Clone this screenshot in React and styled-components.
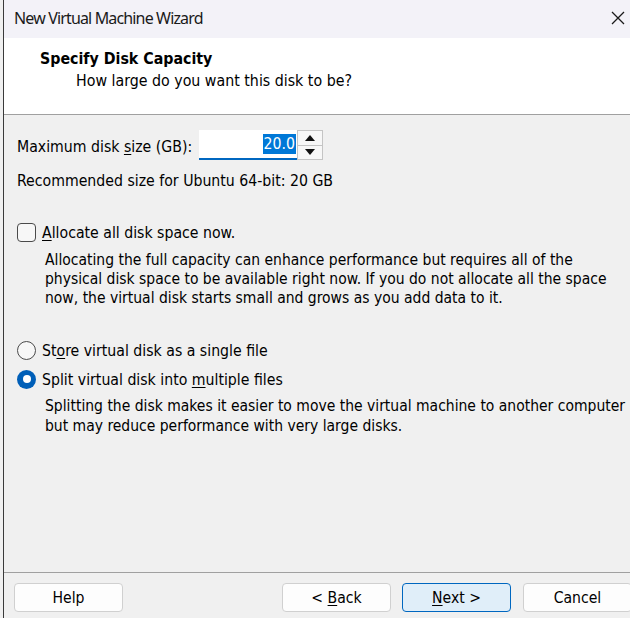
import React from "react";
import styled, { createGlobalStyle } from "styled-components";

const Global = createGlobalStyle`
  html, body { margin: 0; padding: 0; background: #f0f0f0; overflow: hidden; }
  * { box-sizing: border-box; }
`;

const BODY_FONT = `"DejaVu Sans Condensed", "DejaVu Sans", sans-serif`;

const Screen = styled.div`
  width: 630px;
  height: 618px;
  padding-left: 3px;
  overflow: hidden;
  background: #f0f0f0;
  font-family: ${BODY_FONT};
  font-size: 15.7px;
  color: #000;
`;

const Window = styled.div`
  width: 640px;
  height: 618px;
  border-left: 1px solid #3a3a3a;
  display: flex;
  flex-direction: column;
  background: #f0f0f0;
`;

const TitleBar = styled.div`
  height: 38px;
  flex: none;
  background: #f3f2f8;
  display: flex;
  align-items: center;
  justify-content: space-between;
  padding: 0 0 2px 10px;
`;

const TitleText = styled.div`
  font-family: "Noto Sans", sans-serif;
  font-size: 16px;
  letter-spacing: -0.85px;
  color: #1a1a1a;
`;

const CloseBox = styled.div`
  width: 24px;
  margin-right: 13px;
  display: flex;
  justify-content: center;
`;

const Header = styled.div`
  height: 77px;
  flex: none;
  background: #fff;
  border-bottom: 1px solid #a0a0a0;
  padding: 12px 0 0 36px;
`;

const HeaderTitle = styled.div`
  font-weight: bold;
  font-size: 15.8px;
  line-height: 18px;
`;

const HeaderSub = styled.div`
  margin-top: 4px;
  padding-left: 36px;
  font-size: 15.8px;
  line-height: 18px;
`;

const Body = styled.div`
  flex: 1;
  padding: 15px 0 0 13px;
  display: flex;
  flex-direction: column;
`;

const FieldRow = styled.div`
  display: flex;
  align-items: center;
  height: 30px;
`;

const Label = styled.span`
  width: 182px;
  padding-top: 2px;
`;

const Input = styled.div`
  width: 98px;
  height: 30px;
  background: #fff;
  border-bottom: 2px solid #0067c0;
  display: flex;
  align-items: center;
  justify-content: flex-end;
  padding: 0 1px 0 0;
`;

const Selected = styled.span`
  background: #0078d7;
  color: #fff;
  padding: 1px 1px 2px 1px;
  line-height: 17px;
`;

const Spinner = styled.div`
  width: 26px;
  height: 30px;
  display: flex;
  flex-direction: column;
  border: 1px solid #c4c4c4;
  background: #f7f7f7;
`;

const SpinBtn = styled.div`
  flex: 1;
  display: flex;
  align-items: center;
  justify-content: center;
  border-top: ${(p) => (p.$lower ? "1px solid #c4c4c4" : "none")};
`;

const Line = styled.div`
  line-height: 19.5px;
  margin-top: ${(p) => p.$mt || 0}px;
`;

const OptionRow = styled.label`
  display: flex;
  align-items: center;
  gap: 6px;
  height: 20px;
  margin-top: ${(p) => p.$mt || 0}px;
`;

const CheckBox = styled.span`
  width: 19px;
  height: 19px;
  border: 1px solid #4a4a4a;
  border-radius: 4px;
  background: #f7f7f7;
  flex: none;
`;

const Radio = styled.span`
  width: 19px;
  height: 19px;
  border-radius: 50%;
  flex: none;
  border: ${(p) => (p.$on ? "none" : "1px solid #4a4a4a")};
  background: ${(p) => (p.$on ? "#005fb8" : "#f7f7f7")};
  display: flex;
  align-items: center;
  justify-content: center;
  &::after {
    content: "";
    display: ${(p) => (p.$on ? "block" : "none")};
    width: 8px;
    height: 8px;
    border-radius: 50%;
    background: #fff;
  }
`;

const Para = styled.div`
  padding-left: 28px;
  font-size: 15.5px;
  line-height: 19.3px;
  margin-top: ${(p) => p.$mt || 0}px;
`;

const U = styled.span`
  text-decoration: underline;
  text-underline-offset: 2px;
`;

const Footer = styled.div`
  height: 46px;
  flex: none;
  border-top: 1px solid #a0a0a0;
  display: flex;
  align-items: flex-start;
  padding: 10px 0 0 10px;
`;

const Button = styled.button`
  width: 109px;
  height: 29px;
  font-family: ${BODY_FONT};
  font-size: 15.6px;
  color: #000;
  border-radius: 4px;
  border: 1px solid ${(p) => (p.$primary ? "#0067c0" : "#d0d0d0")};
  background: ${(p) => (p.$primary ? "#e0eef9" : "#fdfdfd")};
  margin-left: ${(p) => p.$ml || 0}px;
  padding: 0;
  flex: none;
`;

export default function App() {
  return (
    <>
      <Global />
      <Screen>
        <Window>
          <TitleBar>
            <TitleText>New Virtual Machine Wizard</TitleText>
            <CloseBox>
              <svg width="14" height="14" viewBox="0 0 14 14">
                <path d="M1 1 L13 13 M13 1 L1 13" stroke="#1a1a1a" strokeWidth="1.3" fill="none" />
              </svg>
            </CloseBox>
          </TitleBar>
          <Header>
            <HeaderTitle>Specify Disk Capacity</HeaderTitle>
            <HeaderSub>How large do you want this disk to be?</HeaderSub>
          </Header>
          <Body>
            <FieldRow>
              <Label>
                Maximum disk <U>s</U>ize (GB):
              </Label>
              <Input>
                <Selected>20.0</Selected>
              </Input>
              <Spinner>
                <SpinBtn>
                  <svg width="10" height="6" viewBox="0 0 10 6">
                    <path d="M0 6 L5 0 L10 6 Z" fill="#111" />
                  </svg>
                </SpinBtn>
                <SpinBtn $lower>
                  <svg width="10" height="6" viewBox="0 0 10 6">
                    <path d="M0 0 L10 0 L5 6 Z" fill="#111" />
                  </svg>
                </SpinBtn>
              </Spinner>
            </FieldRow>
            <Line $mt={11}>Recommended size for Ubuntu 64-bit: 20 GB</Line>
            <OptionRow $mt={32}>
              <CheckBox />
              <span>
                <U>A</U>llocate all disk space now.
              </span>
            </OptionRow>
            <Para $mt={8}>
              Allocating the full capacity can enhance performance but requires all of the
              <br />
              physical disk space to be available right now. If you do not allocate all the space
              <br />
              now, the virtual disk starts small and grows as you add data to it.
            </Para>
            <OptionRow $mt={32}>
              <Radio />
              <span>
                St<U>o</U>re virtual disk as a single file
              </span>
            </OptionRow>
            <OptionRow $mt={9}>
              <Radio $on />
              <span>
                Split virtual disk into <U>m</U>ultiple files
              </span>
            </OptionRow>
            <Para $mt={8}>
              Splitting the disk makes it easier to move the virtual machine to another computer
              <br />
              but may reduce performance with very large disks.
            </Para>
          </Body>
          <Footer>
            <Button>Help</Button>
            <Button $ml={159}>
              &lt; <U>B</U>ack
            </Button>
            <Button $ml={11} $primary>
              <U>N</U>ext &gt;
            </Button>
            <Button $ml={12}>Cancel</Button>
          </Footer>
        </Window>
      </Screen>
    </>
  );
}
